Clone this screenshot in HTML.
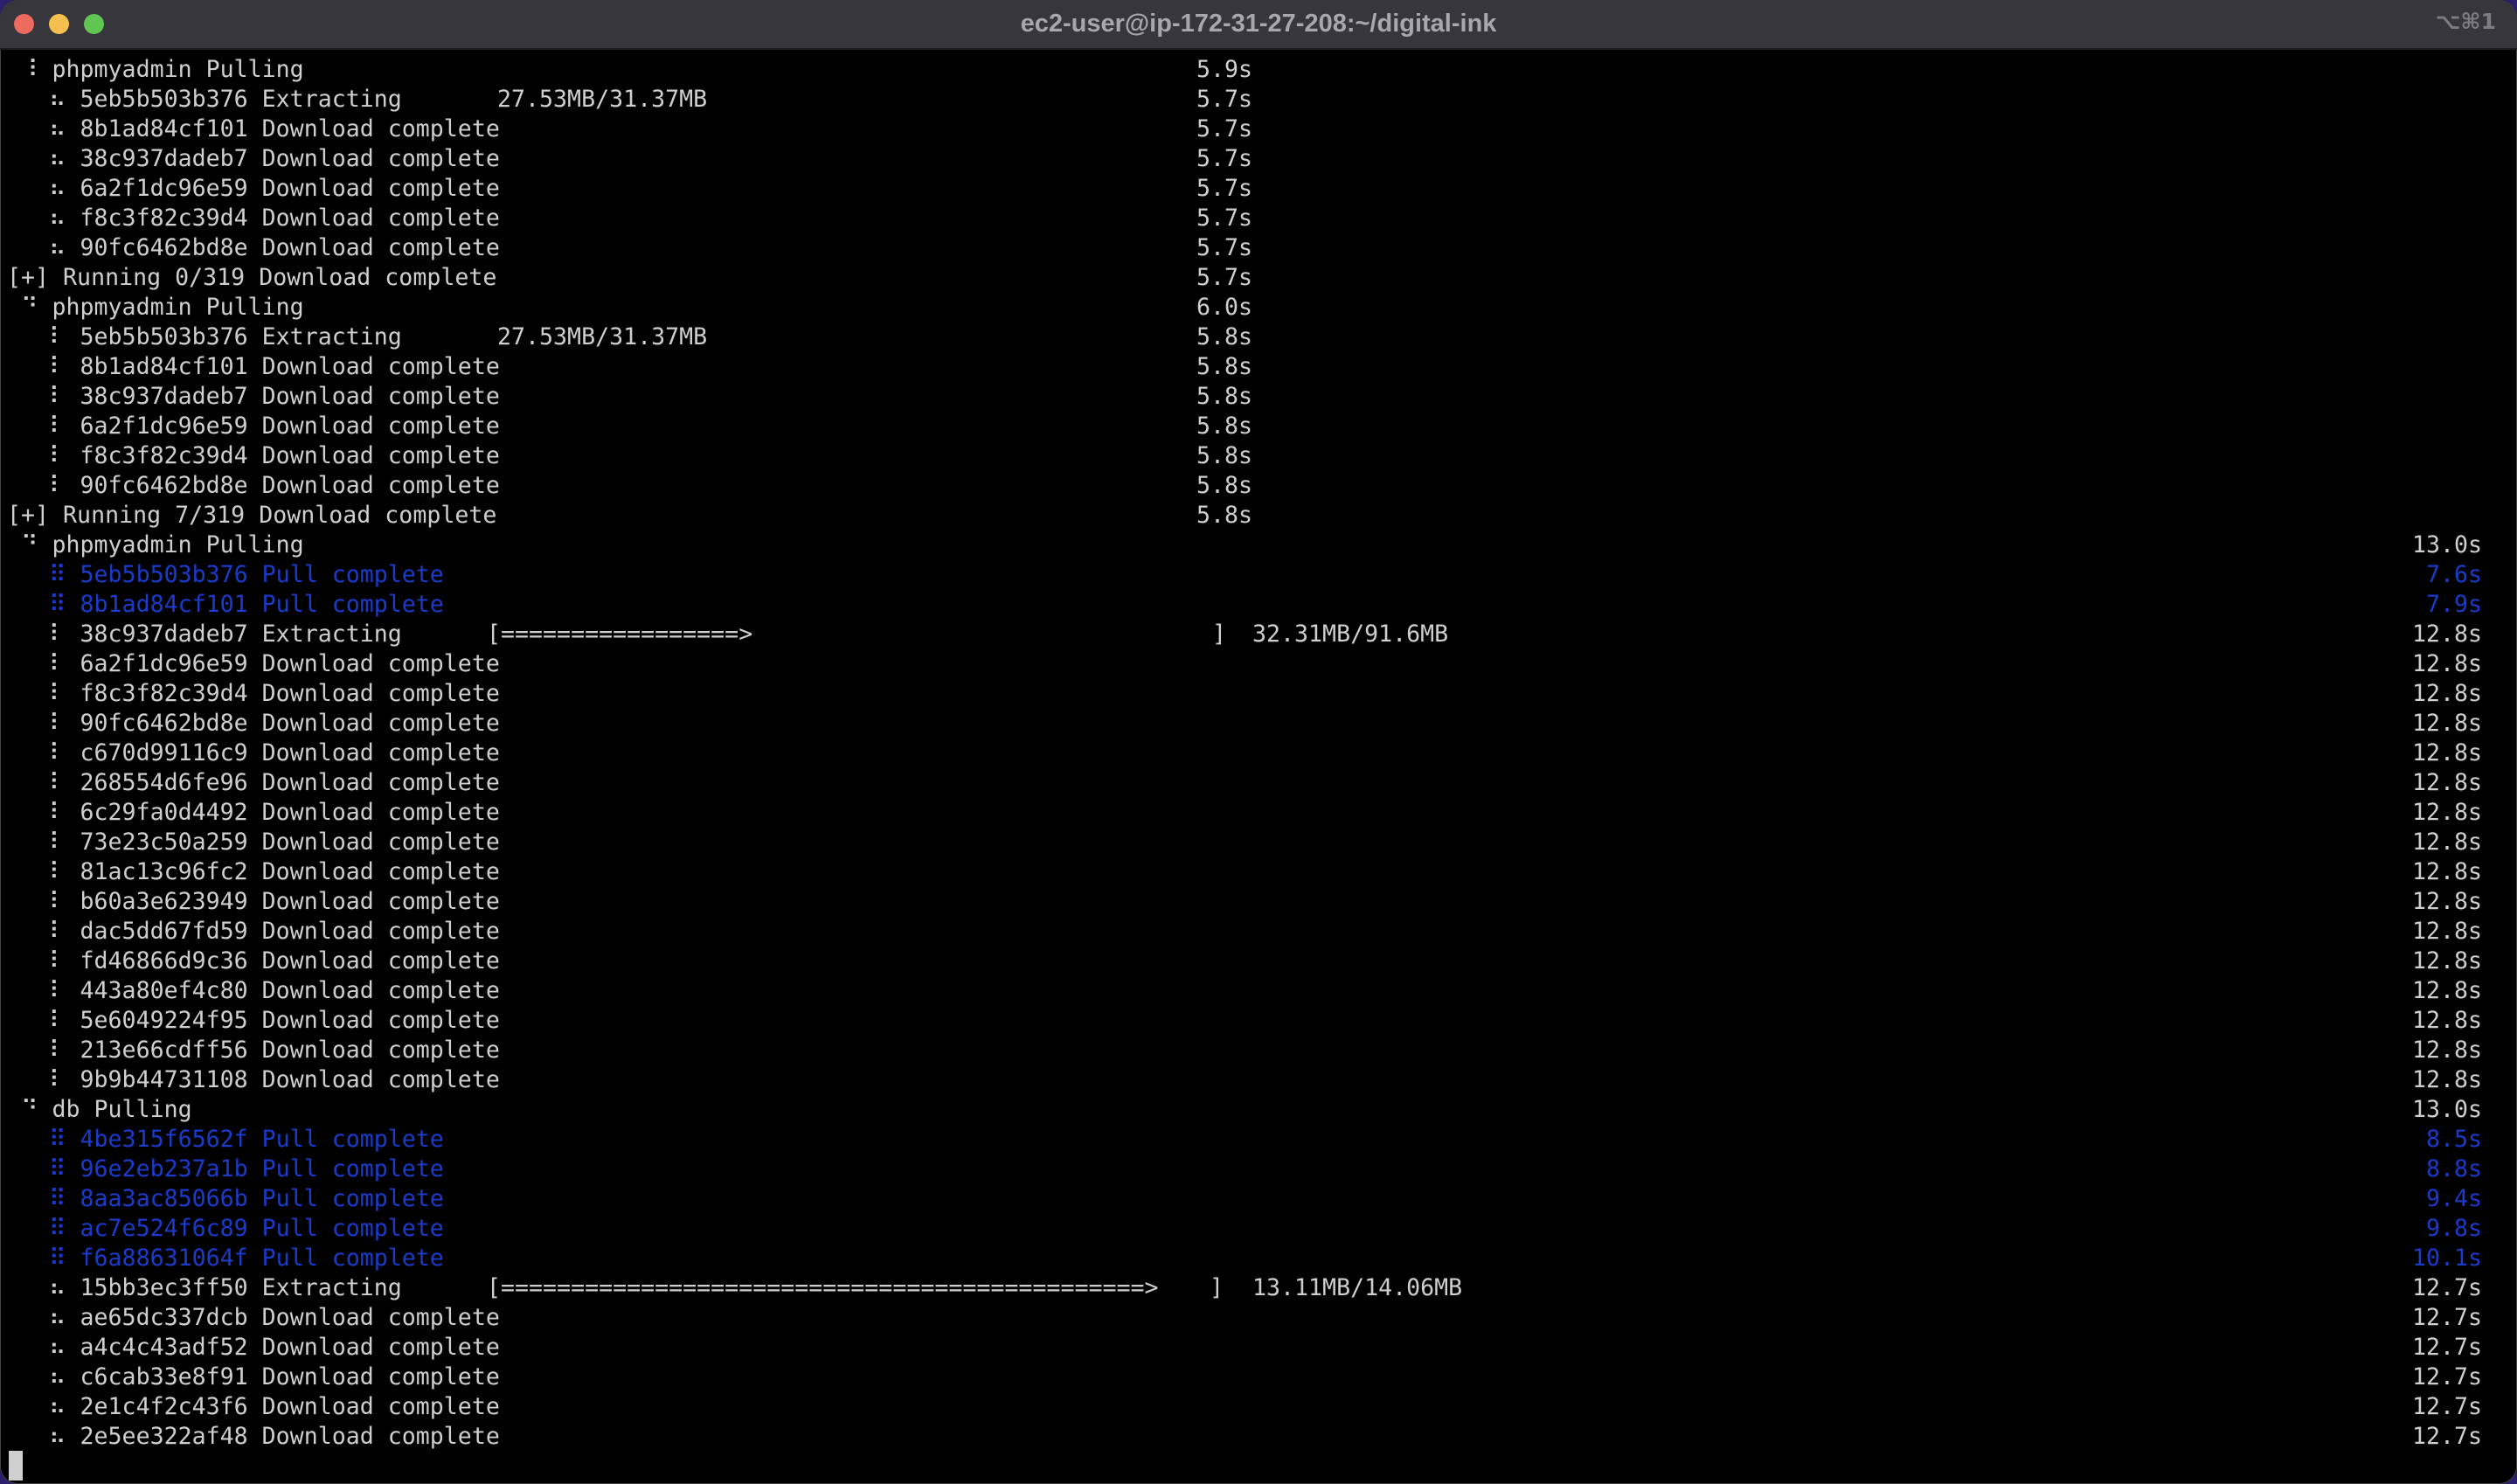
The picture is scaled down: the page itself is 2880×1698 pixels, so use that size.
<!DOCTYPE html>
<html><head><meta charset="utf-8"><style>
html,body{margin:0;padding:0;width:2880px;height:1698px;overflow:hidden;background:#2b1f6e;}
#win{position:absolute;left:0;top:0;width:2880px;height:1698px;background:#000;border-radius:20px;overflow:hidden;box-shadow:inset 0 0 0 1px #444;}
#bar{position:absolute;left:0;top:0;width:2880px;height:55px;background:#37363c;border-bottom:2px solid #1c1c1e;}
.dot{position:absolute;top:16px;width:23px;height:23px;border-radius:50%;}
#title{position:absolute;left:0;width:2880px;top:0;line-height:55px;text-align:center;font-family:"Liberation Sans",sans-serif;font-weight:bold;font-size:29px;color:#a8a7ad;}
#kb{position:absolute;right:24px;top:0;line-height:50px;font-family:"DejaVu Sans","Liberation Sans",sans-serif;font-weight:bold;font-size:25px;color:#7d7c82;}
.r{position:absolute;left:8px;height:34px;line-height:34px;font-family:"DejaVu Sans Mono","Liberation Mono",monospace;font-size:26.6px;color:#cfcfcf;white-space:pre;width:2860px;}
.r span{position:absolute;top:0;}
.t{right:28px;}
.b{color:#1b3bcc;}
.l{left:0;}
</style></head><body>
<div id="win">
<div id="bar">
<div class="dot" style="left:16px;background:#ec6a5e"></div>
<div class="dot" style="left:56px;background:#f4bf4f"></div>
<div class="dot" style="left:96px;background:#61c554"></div>
<div id="title">ec2-user@ip-172-31-27-208:~/digital-ink</div>
<div id="kb">⌥⌘1</div>
</div>

<div class="r" style="top:63px"><span class="l"> ⠸ phpmyadmin Pulling</span><span style="left:1361px">5.9s</span></div>
<div class="r" style="top:97px"><span class="l">   ⠦ 5eb5b503b376 Extracting</span><span style="left:561px">27.53MB/31.37MB</span><span style="left:1361px">5.7s</span></div>
<div class="r" style="top:131px"><span class="l">   ⠦ 8b1ad84cf101 Download complete</span><span style="left:1361px">5.7s</span></div>
<div class="r" style="top:165px"><span class="l">   ⠦ 38c937dadeb7 Download complete</span><span style="left:1361px">5.7s</span></div>
<div class="r" style="top:199px"><span class="l">   ⠦ 6a2f1dc96e59 Download complete</span><span style="left:1361px">5.7s</span></div>
<div class="r" style="top:233px"><span class="l">   ⠦ f8c3f82c39d4 Download complete</span><span style="left:1361px">5.7s</span></div>
<div class="r" style="top:267px"><span class="l">   ⠦ 90fc6462bd8e Download complete</span><span style="left:1361px">5.7s</span></div>
<div class="r" style="top:301px"><span class="l">[+] Running 0/319 Download complete</span><span style="left:1361px">5.7s</span></div>
<div class="r" style="top:335px"><span class="l"> ⠙ phpmyadmin Pulling</span><span style="left:1361px">6.0s</span></div>
<div class="r" style="top:369px"><span class="l">   ⠇ 5eb5b503b376 Extracting</span><span style="left:561px">27.53MB/31.37MB</span><span style="left:1361px">5.8s</span></div>
<div class="r" style="top:403px"><span class="l">   ⠇ 8b1ad84cf101 Download complete</span><span style="left:1361px">5.8s</span></div>
<div class="r" style="top:437px"><span class="l">   ⠇ 38c937dadeb7 Download complete</span><span style="left:1361px">5.8s</span></div>
<div class="r" style="top:471px"><span class="l">   ⠇ 6a2f1dc96e59 Download complete</span><span style="left:1361px">5.8s</span></div>
<div class="r" style="top:505px"><span class="l">   ⠇ f8c3f82c39d4 Download complete</span><span style="left:1361px">5.8s</span></div>
<div class="r" style="top:539px"><span class="l">   ⠇ 90fc6462bd8e Download complete</span><span style="left:1361px">5.8s</span></div>
<div class="r" style="top:573px"><span class="l">[+] Running 7/319 Download complete</span><span style="left:1361px">5.8s</span></div>
<div class="r" style="top:607px"><span class="l"> ⠙ phpmyadmin Pulling</span><span class="t">13.0s</span></div>
<div class="r b" style="top:641px"><span class="l">   ⠿ 5eb5b503b376 Pull complete</span><span class="t">7.6s</span></div>
<div class="r b" style="top:675px"><span class="l">   ⠿ 8b1ad84cf101 Pull complete</span><span class="t">7.9s</span></div>
<div class="r" style="top:709px"><span class="l">   ⠇ 38c937dadeb7 Extracting</span><span style="left:549px">[=================&gt;</span><span style="left:1379px">]</span><span style="left:1425px">32.31MB/91.6MB</span><span class="t">12.8s</span></div>
<div class="r" style="top:743px"><span class="l">   ⠇ 6a2f1dc96e59 Download complete</span><span class="t">12.8s</span></div>
<div class="r" style="top:777px"><span class="l">   ⠇ f8c3f82c39d4 Download complete</span><span class="t">12.8s</span></div>
<div class="r" style="top:811px"><span class="l">   ⠇ 90fc6462bd8e Download complete</span><span class="t">12.8s</span></div>
<div class="r" style="top:845px"><span class="l">   ⠇ c670d99116c9 Download complete</span><span class="t">12.8s</span></div>
<div class="r" style="top:879px"><span class="l">   ⠇ 268554d6fe96 Download complete</span><span class="t">12.8s</span></div>
<div class="r" style="top:913px"><span class="l">   ⠇ 6c29fa0d4492 Download complete</span><span class="t">12.8s</span></div>
<div class="r" style="top:947px"><span class="l">   ⠇ 73e23c50a259 Download complete</span><span class="t">12.8s</span></div>
<div class="r" style="top:981px"><span class="l">   ⠇ 81ac13c96fc2 Download complete</span><span class="t">12.8s</span></div>
<div class="r" style="top:1015px"><span class="l">   ⠇ b60a3e623949 Download complete</span><span class="t">12.8s</span></div>
<div class="r" style="top:1049px"><span class="l">   ⠇ dac5dd67fd59 Download complete</span><span class="t">12.8s</span></div>
<div class="r" style="top:1083px"><span class="l">   ⠇ fd46866d9c36 Download complete</span><span class="t">12.8s</span></div>
<div class="r" style="top:1117px"><span class="l">   ⠇ 443a80ef4c80 Download complete</span><span class="t">12.8s</span></div>
<div class="r" style="top:1151px"><span class="l">   ⠇ 5e6049224f95 Download complete</span><span class="t">12.8s</span></div>
<div class="r" style="top:1185px"><span class="l">   ⠇ 213e66cdff56 Download complete</span><span class="t">12.8s</span></div>
<div class="r" style="top:1219px"><span class="l">   ⠇ 9b9b44731108 Download complete</span><span class="t">12.8s</span></div>
<div class="r" style="top:1253px"><span class="l"> ⠙ db Pulling</span><span class="t">13.0s</span></div>
<div class="r b" style="top:1287px"><span class="l">   ⠿ 4be315f6562f Pull complete</span><span class="t">8.5s</span></div>
<div class="r b" style="top:1321px"><span class="l">   ⠿ 96e2eb237a1b Pull complete</span><span class="t">8.8s</span></div>
<div class="r b" style="top:1355px"><span class="l">   ⠿ 8aa3ac85066b Pull complete</span><span class="t">9.4s</span></div>
<div class="r b" style="top:1389px"><span class="l">   ⠿ ac7e524f6c89 Pull complete</span><span class="t">9.8s</span></div>
<div class="r b" style="top:1423px"><span class="l">   ⠿ f6a88631064f Pull complete</span><span class="t">10.1s</span></div>
<div class="r" style="top:1457px"><span class="l">   ⠦ 15bb3ec3ff50 Extracting</span><span style="left:549px">[==============================================&gt;</span><span style="left:1376px">]</span><span style="left:1425px">13.11MB/14.06MB</span><span class="t">12.7s</span></div>
<div class="r" style="top:1491px"><span class="l">   ⠦ ae65dc337dcb Download complete</span><span class="t">12.7s</span></div>
<div class="r" style="top:1525px"><span class="l">   ⠦ a4c4c43adf52 Download complete</span><span class="t">12.7s</span></div>
<div class="r" style="top:1559px"><span class="l">   ⠦ c6cab33e8f91 Download complete</span><span class="t">12.7s</span></div>
<div class="r" style="top:1593px"><span class="l">   ⠦ 2e1c4f2c43f6 Download complete</span><span class="t">12.7s</span></div>
<div class="r" style="top:1627px"><span class="l">   ⠦ 2e5ee322af48 Download complete</span><span class="t">12.7s</span></div>
<div style="position:absolute;left:10px;top:1660px;width:16px;height:34px;background:#cfcfcf"></div>
</div>
</body></html>
